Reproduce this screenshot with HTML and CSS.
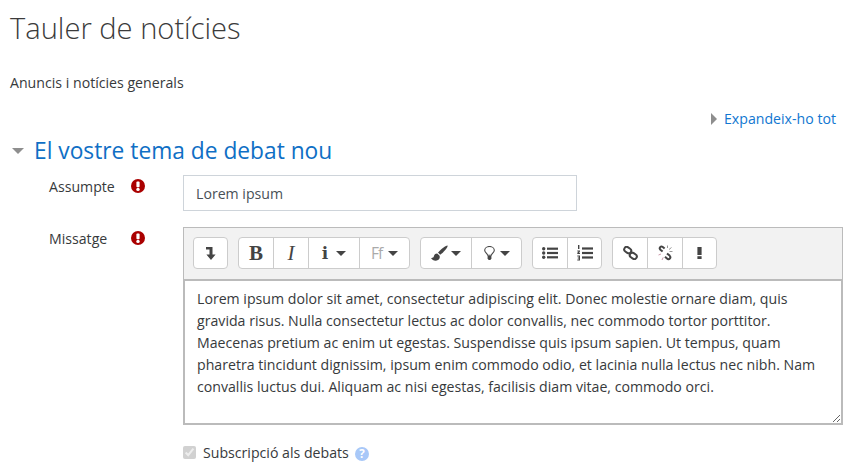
FILE: index.html
```html
<!DOCTYPE html>
<html lang="ca">
<head>
<meta charset="utf-8">
<title>Tauler de notícies</title>
<link rel="stylesheet" href="styles.css">
</head>
<body>
<h2 class="title">Tauler de notícies</h2>
<p class="intro">Anuncis i notícies generals</p>
<div class="expand-row">
  <a class="expand">
    <svg class="tri-right" width="6" height="12" viewBox="0 0 6 12"><path d="M0 0L6 6L0 12Z"/></svg>
    Expandeix-ho tot
  </a>
</div>
<div class="legend">
  <svg class="tri-down" width="12" height="6" viewBox="0 0 12 6"><path d="M0 0H12L6 6Z"/></svg>
  <h3>El vostre tema de debat nou</h3>
</div>
<div class="row row-subject">
  <label class="label">Assumpte</label>
  <span class="req"><svg width="14" height="14" viewBox="0 0 14 14"><circle cx="7" cy="7" r="7"/><rect class="mark" x="5.4" y="2.4" width="3.2" height="5.8" rx="1"/><circle class="mark" cx="7" cy="10.4" r="1.7"/></svg></span>
  <input class="subject" type="text" value="Lorem ipsum">
</div>
<div class="row row-message">
  <label class="label">Missatge</label>
  <span class="req"><svg width="14" height="14" viewBox="0 0 14 14"><circle cx="7" cy="7" r="7"/><rect class="mark" x="5.4" y="2.4" width="3.2" height="5.8" rx="1"/><circle class="mark" cx="7" cy="10.4" r="1.7"/></svg></span>
  <div class="editor">
    <div class="toolbar">
      <div class="group">
        <button class="btn"><svg width="10" height="13" viewBox="0 0 10 13"><path d="M0 0H6.5V7.5H9.6L5 13L.4 7.5H3.5V2.6H0Z"/></svg></button>
      </div>
      <div class="group">
        <button class="btn glyph-b">B</button>
        <button class="btn glyph-i">I</button>
        <button class="btn wide gap-8"><span class="glyph-info">i</span><i class="caret"></i></button>
        <button class="btn wide gap-6"><span class="glyph-ff">Ff</span><i class="caret"></i></button>
      </div>
      <div class="group">
        <button class="btn wide gap-3"><svg width="17" height="16" viewBox="0 0 17 16"><path d="M16.6 .4C14.6 .2 9.6 4.4 7 7.6L9.2 9.8C12.4 7.2 17 2.6 16.6 .4Z"/><path d="M6.2 8.4C3.6 8.4 3.2 10.2 2.8 11.6C2.4 12.8 1.4 13.2 0 13C1.2 15.4 4.6 16.4 7 15C8.8 13.8 9.2 11.8 8.4 10.4Z"/></svg><i class="caret"></i></button>
        <button class="btn wide gap-5"><svg width="11" height="14" viewBox="0 0 11 14"><path class="ink-thin" d="M3.6 9.2C3.4 7.4 .7 6.6 .7 4.2A4.8 3.7 0 0 1 10.3 4.2C10.3 6.6 7.6 7.4 7.4 9.2Z"/><path d="M3.6 10H7.4V12.4L6.4 14H4.6L3.6 12.4Z"/></svg><i class="caret"></i></button>
      </div>
      <div class="group">
        <button class="btn"><svg width="16" height="12" viewBox="0 0 16 12"><circle cx="1.7" cy="1.7" r="1.7"/><circle cx="1.7" cy="6" r="1.7"/><circle cx="1.7" cy="10.3" r="1.7"/><rect x="5" y=".6" width="11" height="2.2"/><rect x="5" y="4.9" width="11" height="2.2"/><rect x="5" y="9.2" width="11" height="2.2"/></svg></button>
        <button class="btn"><svg width="16" height="16" viewBox="0 0 16 16"><path d="M1 0H2.4V4H1ZM.3 5.4H3V6.6L1.8 7.8H3V9H.3V7.8L1.6 6.6H.3ZM.3 10.6H3V15.4H.3V14.4H1.8V13.4H.7V12.5H1.8V11.6H.3Z"/><rect x="5" y="2.4" width="11" height="2.2"/><rect x="5" y="6.9" width="11" height="2.2"/><rect x="5" y="11.4" width="11" height="2.2"/></svg></button>
      </div>
      <div class="group">
        <button class="btn"><svg width="15" height="14" viewBox="0 0 15 14"><g class="ink-link"><rect x="1" y="1.6" width="7.4" height="5" rx="2.5" transform="rotate(35 4.7 4.1)"/><rect x="6.6" y="7.4" width="7.4" height="5" rx="2.5" transform="rotate(35 10.3 9.9)"/></g></svg></button>
        <button class="btn"><svg width="15" height="16" viewBox="0 0 15 16"><path class="ink-link" d="M4.6 6.6L2.4 4.8C.6 3 2.8 .6 4.8 2L6.6 3.6M9 8.4L11.6 10.6C13.6 12.6 11 15.4 9 13.6L7 11.8"/><path class="ray-gray" d="M9.5 .5V3M11 4.5L13.5 2.5M11.5 6.5H14.5"/><path class="ray-pink" d="M.5 10L3 9M4 15L5.2 12.4"/></svg></button>
        <button class="btn"><svg width="5" height="12" viewBox="0 0 5 12"><rect x=".4" y="0" width="4.2" height="8"/><rect x=".4" y="9.2" width="4.2" height="2.8"/></svg></button>
      </div>
    </div>
    <textarea class="body" spellcheck="false">Lorem ipsum dolor sit amet, consectetur adipiscing elit. Donec molestie ornare diam, quis gravida risus. Nulla consectetur lectus ac dolor convallis, nec commodo tortor porttitor. Maecenas pretium ac enim ut egestas. Suspendisse quis ipsum sapien. Ut tempus, quam pharetra tincidunt dignissim, ipsum enim commodo odio, et lacinia nulla lectus nec nibh. Nam convallis luctus dui. Aliquam ac nisi egestas, facilisis diam vitae, commodo orci.</textarea>
  </div>
</div>
<div class="subscribe">
  <input class="check" type="checkbox" checked disabled>
  <span>Subscripció als debats</span>
  <svg class="help" width="14" height="14" viewBox="0 0 14 14"><circle cx="7" cy="7" r="7"/><text x="7" y="11.4" text-anchor="middle">?</text></svg>
</div>
</body>
</html>
```
FILE: styles.css
```css
* { box-sizing: border-box; }
html, body { margin: 0; height: 468px; overflow: hidden; }
body {
  background: #fff;
  color: #373a3c;
  font-family: "Open Sans", sans-serif;
  font-size: 14.15px;
  line-height: 21px;
  padding-left: 10px;
}
.title {
  margin: 0;
  padding-top: 9px;
  font-size: 29.1px;
  line-height: 38px;
  font-weight: 300;
  color: #3b3b3b;
}
.intro { margin: 26px 0 0; line-height: 19px; }
.expand-row {
  display: flex;
  justify-content: flex-end;
  margin-top: 16px;
  padding-right: 12px;
}
.expand { display: flex; align-items: center; gap: 7px; color: #1177d1; }
.tri-right, .tri-down { fill: #8e8e8e; }
.legend { display: flex; align-items: center; gap: 10px; margin-top: 7px; padding-left: 2px; }
.legend h3 { margin: 0; font-size: 22.75px; line-height: 30px; font-weight: 400; color: #0f6fc5; }
.row { display: flex; align-items: flex-start; padding-left: 39px; }
.row-subject { margin-top: 9px; }
.row-message { margin-top: 16px; }
.label { width: 82px; line-height: 24px; }
.req { width: 52px; padding-top: 4px; display: flex; }
.req svg { fill: #a00; }
.req svg .mark { fill: #fff; }
.subject {
  width: 394px;
  height: 36px;
  padding: 0 12px;
  border: 1px solid #ced4da;
  color: #495057;
  font: 14.15px "Open Sans", sans-serif;
  outline: none;
}
.editor { width: 660px; }
.toolbar {
  display: flex;
  gap: 10px;
  height: 52px;
  padding: 9px 9px 0;
  background: #f2f2f2;
  border: 1px solid #bbb;
  border-bottom: 0;
}
.group {
  display: flex;
  height: 32px;
  background: #fff;
  border: 1px solid #ccc;
  border-radius: 4px;
}
.btn {
  display: flex;
  align-items: center;
  justify-content: center;
  gap: 5px;
  width: 35px;
  padding: 0;
  background: none;
  border: 0;
  border-left: 1px solid #ccc;
  color: #444;
  fill: #444;
}
.btn:last-child { width: 34px; }
.btn:first-child { width: 34px; border-left: 0; }
.btn:only-child { width: 33px; }
.btn.wide { width: 51px; }
.btn.wide:last-child { width: 50px; }
.btn.wide:first-child { width: 50px; }
.btn.gap-3 { gap: 3px; }
.btn.gap-5 { gap: 5px; }
.btn.gap-6 { gap: 6px; }
.btn.gap-8 { gap: 8px; }
.caret { width: 0; height: 0; border: 5px solid transparent; border-top: 5px solid #444; border-bottom: 0; }
.glyph-b, .glyph-i { font: 21px "Liberation Serif", serif; }
.glyph-b { font-weight: 700; }
.glyph-i { font-style: italic; }
.glyph-info { font: 700 17px "DejaVu Serif", serif; line-height: 1; }
.glyph-ff { font: 15.5px "Open Sans", sans-serif; color: #aaa; letter-spacing: -1px; }
.ink-thin { fill: none; stroke: #444; stroke-width: 1.1; }
.ink-link, .ink-link rect { fill: none; stroke: #444; stroke-width: 2; }
.ray-gray { fill: none; stroke: #999; stroke-width: 1; }
.ray-pink { fill: none; stroke: #c9a; stroke-width: 1; }
.body {
  display: block;
  width: 660px;
  height: 146px;
  padding: 6.5px 12px;
  border: 2px solid #bbb;
  border-radius: 0;
  color: #373a3c;
  font: 14.15px/22.15px "Open Sans", sans-serif;
  resize: both;
  outline: none;
  overflow: hidden;
}
.subscribe { display: flex; align-items: center; margin: 17px 0 0 173px; line-height: 21px; }
.check { width: 13px; height: 13px; margin: 0 7px 0 0; }
.help { margin: 3px 0 0 6px; fill: #a8c8f8; }
.help text { fill: #fff; font: 700 11.5px "Open Sans", sans-serif; }
```
